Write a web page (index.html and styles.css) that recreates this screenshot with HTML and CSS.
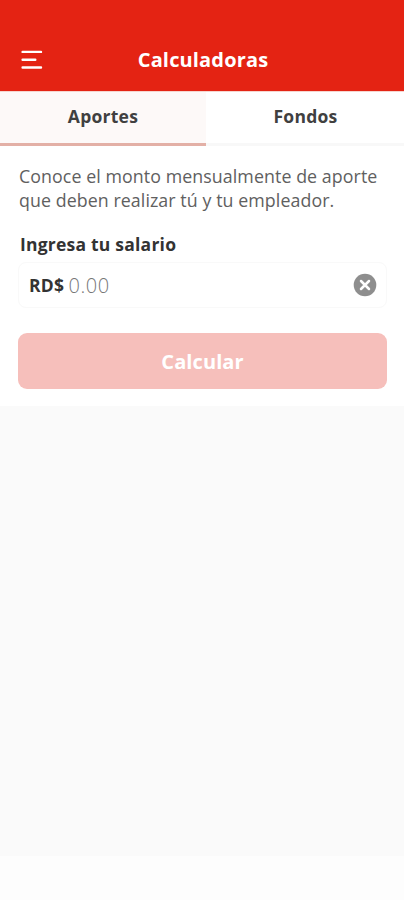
FILE: index.html
```html
<!DOCTYPE html>
<html lang="es">
<head>
<meta charset="utf-8">
<meta name="viewport" content="width=device-width, initial-scale=1">
<title>Calculadoras</title>
<link rel="stylesheet" href="styles.css">
</head>
<body>
<div class="screen">
  <header class="header">
    <button class="menu" aria-label="Menú">
      <svg width="23" height="20" viewBox="0 0 23 20" fill="none" stroke="currentColor" stroke-width="2.4" stroke-linecap="round"><path d="M1.6 1.9H20M1.6 9.7H14.3M1.6 17.5H20"/></svg>
    </button>
    <h1 class="title"><span>Calculadoras</span></h1>
  </header>
  <nav class="tabs">
    <a class="tab tab-active"><span>Aportes</span></a>
    <a class="tab"><span>Fondos</span></a>
  </nav>
  <main class="panel">
    <p class="intro"><span>Conoce el monto mensualmente de aporte</span><br><span>que deben realizar tú y tu empleador.</span></p>
    <h2 class="label"><span>Ingresa tu salario</span></h2>
    <div class="field">
      <span class="currency">RD$</span>
      <span class="amount">0.00</span>
      <svg class="clear" width="24" height="24" viewBox="0 0 24 24"><circle cx="12" cy="12" r="11.3" fill="#8e8e8e"/><path d="M8 8l8 8M16 8l-8 8" stroke="#fff" stroke-width="2.5" stroke-linecap="round"/></svg>
    </div>
    <button class="submit"><span>Calcular</span></button>
  </main>
  <footer class="bottom"></footer>
</div>
</body>
</html>
```
FILE: styles.css
```css
* { box-sizing: border-box; }
body { margin: 0; font-family: "Open Sans", sans-serif; color: #404040; }
button { border: 0; padding: 0; font-family: inherit; }
h1, h2, p { margin: 0; }
.screen { display: flex; flex-direction: column; width: 100%; height: 900px; background: #fafafa; }
.header { display: grid; grid-template-columns: 64px 1fr 62px; align-items: center; height: 91px; padding-top: 29px; background: #e42313; color: #fff; }
.menu { display: flex; margin-left: 21px; background: none; color: #fff; }
.title { text-align: center; font-size: 20px; line-height: 28px; font-weight: 700; letter-spacing: 0.15px; }
.tabs { display: flex; height: 55px; background: #fff; border-top: 1px solid #f6d5cf; }
.tab { display: flex; flex: 0 0 206px; justify-content: center; padding-top: 12px; font-size: 17.5px; line-height: 25px; font-weight: 700; letter-spacing: 0.25px; background: #fdf9f8; border-bottom: 3px solid #e3b0a6; }
.tab:last-child { flex: 1; padding-left: 1px; background: #fff; border-bottom-color: #f8f8f8; }
.panel { height: 260px; padding: 18px 17px 0 18px; background: #fff; }
.intro { padding-left: 1px; font-size: 17.8px; line-height: 24px; letter-spacing: 0.08px; color: #606060; white-space: nowrap; }
.label { margin: 19px 0 0 2px; font-size: 17.5px; line-height: 26px; font-weight: 700; letter-spacing: 0.22px; color: #333; }
.field { display: flex; align-items: center; height: 46px; margin-top: 5px; padding: 0 9px 0 10px; border: 1px solid #f9f9f9; border-radius: 8px; }
.currency { font-size: 17.5px; font-weight: 700; letter-spacing: 0.3px; color: #333; }
.amount { margin-left: 4px; font-size: 20px; font-weight: 300; letter-spacing: 0.6px; color: #777; }
.clear { margin-left: auto; }
.submit { display: block; width: 100%; height: 56px; margin-top: 25px; border-radius: 9px; background: #f6bfbb; color: #fff; font-size: 20px; font-weight: 700; letter-spacing: 0.1px; }
.bottom { height: 44px; margin-top: auto; background: #fdfdfd; }
```
